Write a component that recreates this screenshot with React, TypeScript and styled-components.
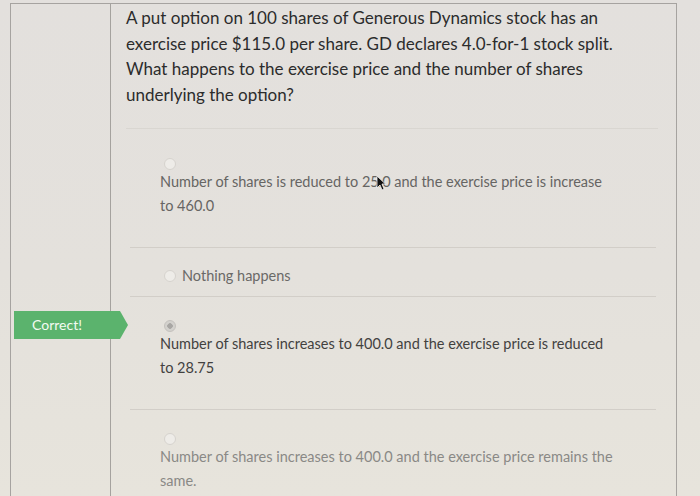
import styled, { createGlobalStyle } from "styled-components";

const GlobalStyle = createGlobalStyle`
  html, body {
    margin: 0;
    padding: 0;
  }
  body {
    height: 496px;
    overflow: hidden;
    background: linear-gradient(180deg, #e3e0dd 0%, #e4e1dc 55%, #e7e4dc 100%);
    font-family: Lato, "Open Sans", "Liberation Sans", sans-serif;
  }
`;

const Frame = styled.div`
  display: grid;
  grid-template-columns: 100px 1fr;
  width: 667px;
  min-height: 493px;
  margin: 3px 0 0 10px;
  border: 1px solid #a6a3a0;
  border-bottom: none;
  box-sizing: border-box;
`;

const Side = styled.div`
  border-right: 1px solid #a5a29e;
`;

const Main = styled.div`
  padding: 1px 20px 0 15px;
`;

const Question = styled.div`
  padding: 0 0 21px 0;
  border-bottom: 1px solid #d9d6d1;
  margin-right: -2px;
`;

const QuestionText = styled.p`
  margin: 0;
  max-width: 505px;
  font-size: 17px;
  line-height: 25.5px;
  color: #2c2c2c;
`;

const Answers = styled.div`
  margin: 6px 0 0 4px;
`;

// one answer row; short answers sit on the radio's line
const Answer = styled.div<{ $inline?: boolean }>`
  position: relative;
  display: flex;
  flex-direction: ${(p) => (p.$inline ? "row" : "column")};
  align-items: ${(p) => (p.$inline ? "center" : "flex-start")};
  gap: ${(p) => (p.$inline ? "6px" : "0")};
  padding: ${(p) => (p.$inline ? "16px 30px 8px 30px" : "23px 40px 29px 30px")};

  & + & {
    border-top: 1px solid #d2cec8;
  }
`;

const Radio = styled.span<{ $checked?: boolean }>`
  display: block;
  flex: none;
  width: 12px;
  height: 12px;
  margin-left: 4px;
  border-radius: 50%;
  box-sizing: border-box;
  border: 1px solid ${(p) => (p.$checked ? "#c4c1bd" : "#d6d3ce")};
  background: ${(p) =>
    p.$checked
      ? "radial-gradient(circle, #a8a6a3 0 2.5px, #d3d1cd 3px)"
      : "#eeece8"};
`;

const AnswerText = styled.div<{ $tone: string }>`
  font-size: 14.5px;
  line-height: 24px;
  color: ${(p) => p.$tone};
`;

const Badge = styled.div`
  position: absolute;
  top: 14px;
  left: -116px;
  width: 114px;
  height: 28px;
  padding-left: 18px;
  box-sizing: border-box;
  background: #5bb36d;
  color: #f3fbf1;
  font-size: 14px;
  line-height: 28px;
  clip-path: polygon(0 0, 93% 0, 100% 50%, 93% 100%, 0 100%);
`;

const CursorSpot = styled.span`
  position: relative;
`;

const Cursor = styled.svg`
  position: absolute;
  left: -3px;
  top: 2px;
`;

export default function App() {
  return (
    <>
      <GlobalStyle />
      <Frame>
        <Side />
        <Main>
          <Question>
            <QuestionText>
              A put option on 100 shares of Generous Dynamics stock has an exercise price $115.0
              per share. GD declares 4.0-for-1 stock split. What happens to the exercise price and
              the number of shares underlying the option?
            </QuestionText>
          </Question>
          <Answers>
            <Answer>
              <Radio />
              <AnswerText $tone="#666563">
                Number of shares is reduced to 25
                <CursorSpot>
                  .
                  <Cursor width="10" height="16" viewBox="0 0 10 16">
                    <path
                      d="M1 1 L1 13 L4 10 L6 15 L8 14 L6 9 L9.5 9 Z"
                      fill="#111"
                      stroke="#f4f4f4"
                      strokeWidth="0.8"
                    />
                  </Cursor>
                </CursorSpot>
                0 and the exercise price is increase to 460.0
              </AnswerText>
            </Answer>
            <Answer $inline>
              <Radio />
              <AnswerText $tone="#6a6967">Nothing happens</AnswerText>
            </Answer>
            <Answer>
              <Badge>Correct!</Badge>
              <Radio $checked />
              <AnswerText $tone="#42413f">
                Number of shares increases to 400.0 and the exercise price is reduced to 28.75
              </AnswerText>
            </Answer>
            <Answer>
              <Radio />
              <AnswerText $tone="#8a8986">
                Number of shares increases to 400.0 and the exercise price remains the same.
              </AnswerText>
            </Answer>
          </Answers>
        </Main>
      </Frame>
    </>
  );
}
